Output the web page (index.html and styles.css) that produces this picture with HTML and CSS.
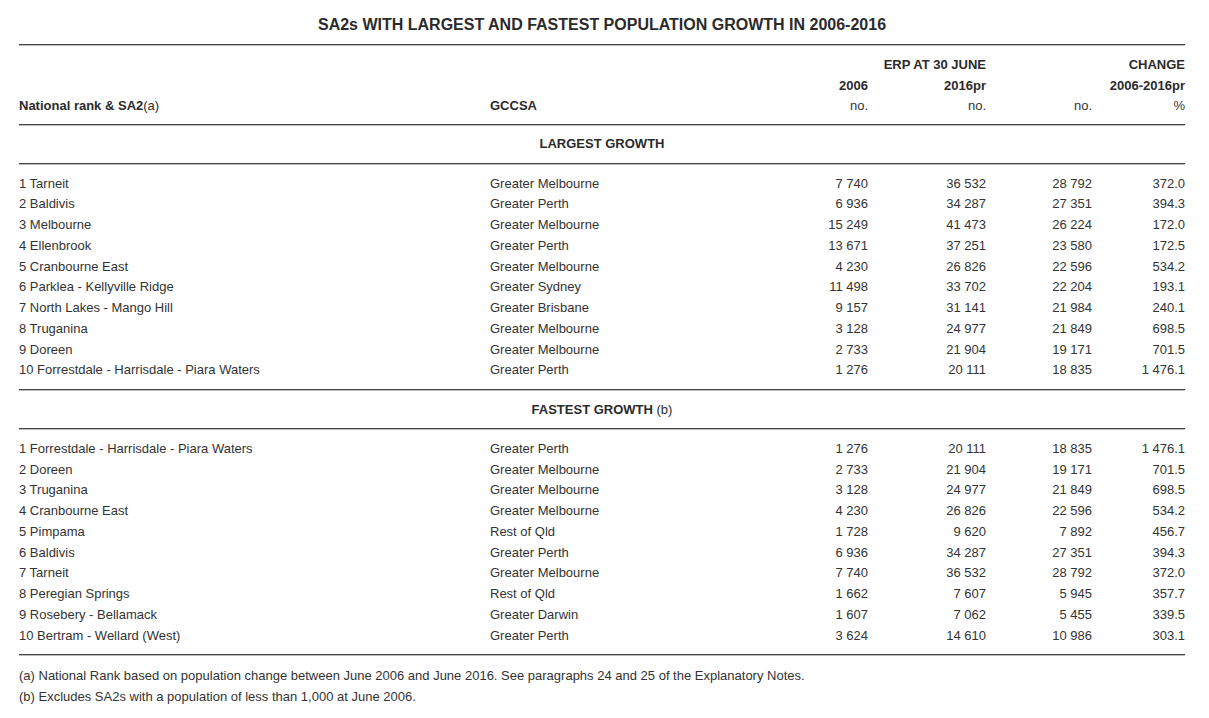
FILE: index.html
```html
<!DOCTYPE html>
<html lang="en">
<head>
<meta charset="utf-8">
<title>SA2s with largest and fastest population growth in 2006-2016</title>
<link rel="stylesheet" href="styles.css">
</head>
<body>
<div class="page">
  <h1 class="title">SA2s WITH LARGEST AND FASTEST POPULATION GROWTH IN 2006-2016</h1>
  <div class="rule"></div>

  <div class="section head">
    <div class="row">
      <span class="c34 num b">ERP AT 30 JUNE</span>
      <span class="c56 num b">CHANGE</span>
    </div>
    <div class="row">
      <span class="c3 num b">2006</span>
      <span class="c4 num b">2016pr</span>
      <span class="c56 num b">2006-2016pr</span>
    </div>
    <div class="row">
      <span class="b">National rank &amp; SA2<span class="n">(a)</span></span>
      <span class="b">GCCSA</span>
      <span class="num">no.</span>
      <span class="num">no.</span>
      <span class="num">no.</span>
      <span class="num">%</span>
    </div>
  </div>
  <div class="rule"></div>

  <div class="section band"><div class="band-title">LARGEST GROWTH</div></div>
  <div class="rule"></div>

  <div class="section data">
    <div class="row"><span>1 Tarneit</span><span>Greater Melbourne</span><span class="num">7 740</span><span class="num">36 532</span><span class="num">28 792</span><span class="num">372.0</span></div>
    <div class="row"><span>2 Baldivis</span><span>Greater Perth</span><span class="num">6 936</span><span class="num">34 287</span><span class="num">27 351</span><span class="num">394.3</span></div>
    <div class="row"><span>3 Melbourne</span><span>Greater Melbourne</span><span class="num">15 249</span><span class="num">41 473</span><span class="num">26 224</span><span class="num">172.0</span></div>
    <div class="row"><span>4 Ellenbrook</span><span>Greater Perth</span><span class="num">13 671</span><span class="num">37 251</span><span class="num">23 580</span><span class="num">172.5</span></div>
    <div class="row"><span>5 Cranbourne East</span><span>Greater Melbourne</span><span class="num">4 230</span><span class="num">26 826</span><span class="num">22 596</span><span class="num">534.2</span></div>
    <div class="row"><span>6 Parklea - Kellyville Ridge</span><span>Greater Sydney</span><span class="num">11 498</span><span class="num">33 702</span><span class="num">22 204</span><span class="num">193.1</span></div>
    <div class="row"><span>7 North Lakes - Mango Hill</span><span>Greater Brisbane</span><span class="num">9 157</span><span class="num">31 141</span><span class="num">21 984</span><span class="num">240.1</span></div>
    <div class="row"><span>8 Truganina</span><span>Greater Melbourne</span><span class="num">3 128</span><span class="num">24 977</span><span class="num">21 849</span><span class="num">698.5</span></div>
    <div class="row"><span>9 Doreen</span><span>Greater Melbourne</span><span class="num">2 733</span><span class="num">21 904</span><span class="num">19 171</span><span class="num">701.5</span></div>
    <div class="row"><span>10 Forrestdale - Harrisdale - Piara Waters</span><span>Greater Perth</span><span class="num">1 276</span><span class="num">20 111</span><span class="num">18 835</span><span class="num">1 476.1</span></div>
  </div>
  <div class="rule"></div>

  <div class="section band"><div class="band-title">FASTEST GROWTH <span class="n">(b)</span></div></div>
  <div class="rule"></div>

  <div class="section data">
    <div class="row"><span>1 Forrestdale - Harrisdale - Piara Waters</span><span>Greater Perth</span><span class="num">1 276</span><span class="num">20 111</span><span class="num">18 835</span><span class="num">1 476.1</span></div>
    <div class="row"><span>2 Doreen</span><span>Greater Melbourne</span><span class="num">2 733</span><span class="num">21 904</span><span class="num">19 171</span><span class="num">701.5</span></div>
    <div class="row"><span>3 Truganina</span><span>Greater Melbourne</span><span class="num">3 128</span><span class="num">24 977</span><span class="num">21 849</span><span class="num">698.5</span></div>
    <div class="row"><span>4 Cranbourne East</span><span>Greater Melbourne</span><span class="num">4 230</span><span class="num">26 826</span><span class="num">22 596</span><span class="num">534.2</span></div>
    <div class="row"><span>5 Pimpama</span><span>Rest of Qld</span><span class="num">1 728</span><span class="num">9 620</span><span class="num">7 892</span><span class="num">456.7</span></div>
    <div class="row"><span>6 Baldivis</span><span>Greater Perth</span><span class="num">6 936</span><span class="num">34 287</span><span class="num">27 351</span><span class="num">394.3</span></div>
    <div class="row"><span>7 Tarneit</span><span>Greater Melbourne</span><span class="num">7 740</span><span class="num">36 532</span><span class="num">28 792</span><span class="num">372.0</span></div>
    <div class="row"><span>8 Peregian Springs</span><span>Rest of Qld</span><span class="num">1 662</span><span class="num">7 607</span><span class="num">5 945</span><span class="num">357.7</span></div>
    <div class="row"><span>9 Rosebery - Bellamack</span><span>Greater Darwin</span><span class="num">1 607</span><span class="num">7 062</span><span class="num">5 455</span><span class="num">339.5</span></div>
    <div class="row"><span>10 Bertram - Wellard (West)</span><span>Greater Perth</span><span class="num">3 624</span><span class="num">14 610</span><span class="num">10 986</span><span class="num">303.1</span></div>
  </div>
  <div class="rule"></div>

  <div class="notes">
    <p>(a) National Rank based on population change between June 2006 and June 2016. See paragraphs 24 and 25 of the Explanatory Notes.</p>
    <p>(b) Excludes SA2s with a population of less than 1,000 at June 2006.</p>
  </div>
</div>
</body>
</html>
```

FILE: styles.css
```css
html, body {
  margin: 0;
  padding: 0;
  background: #ffffff;
}

body {
  font-family: "Liberation Sans", Arial, sans-serif;
  font-size: 13px;
  color: #333333;
}

.page {
  width: 1166px;
  padding: 15px 0 0 19px;
}

.title {
  margin: 0 0 9px 0;
  font-size: 16px;
  line-height: 20px;
  font-weight: bold;
  text-align: center;
  color: #2b2b2b;
}

.rule {
  height: 0;
  border-top: 1px solid #444444;
  border-bottom: 1px solid #bdbdbd;
}

.section {
  display: flex;
  flex-direction: column;
}

.head {
  padding: 9px 0 7.25px;
}

.head .row {
  height: 20.5px;
  line-height: 20.5px;
}

.band {
  padding: 8.5px 0 7.5px;
}

.data {
  padding: 9px 0 8px;
}

.row {
  display: grid;
  grid-template-columns: 471px 279px 99px 118px 106px 93px;
  height: 20.75px;
  line-height: 20.75px;
  white-space: nowrap;
}

.num {
  text-align: right;
}

.b {
  font-weight: bold;
  color: #2b2b2b;
}

.n {
  font-weight: normal;
}

.c3 { grid-column: 3; }
.c4 { grid-column: 4; }
.c34 { grid-column: 3 / 5; }
.c56 { grid-column: 5 / 7; }

.band-title {
  height: 20.75px;
  line-height: 20.75px;
  text-align: center;
  font-weight: bold;
  color: #2b2b2b;
}

.notes {
  padding-top: 9px;
}

.notes p {
  margin: 0;
  line-height: 21px;
}
```
